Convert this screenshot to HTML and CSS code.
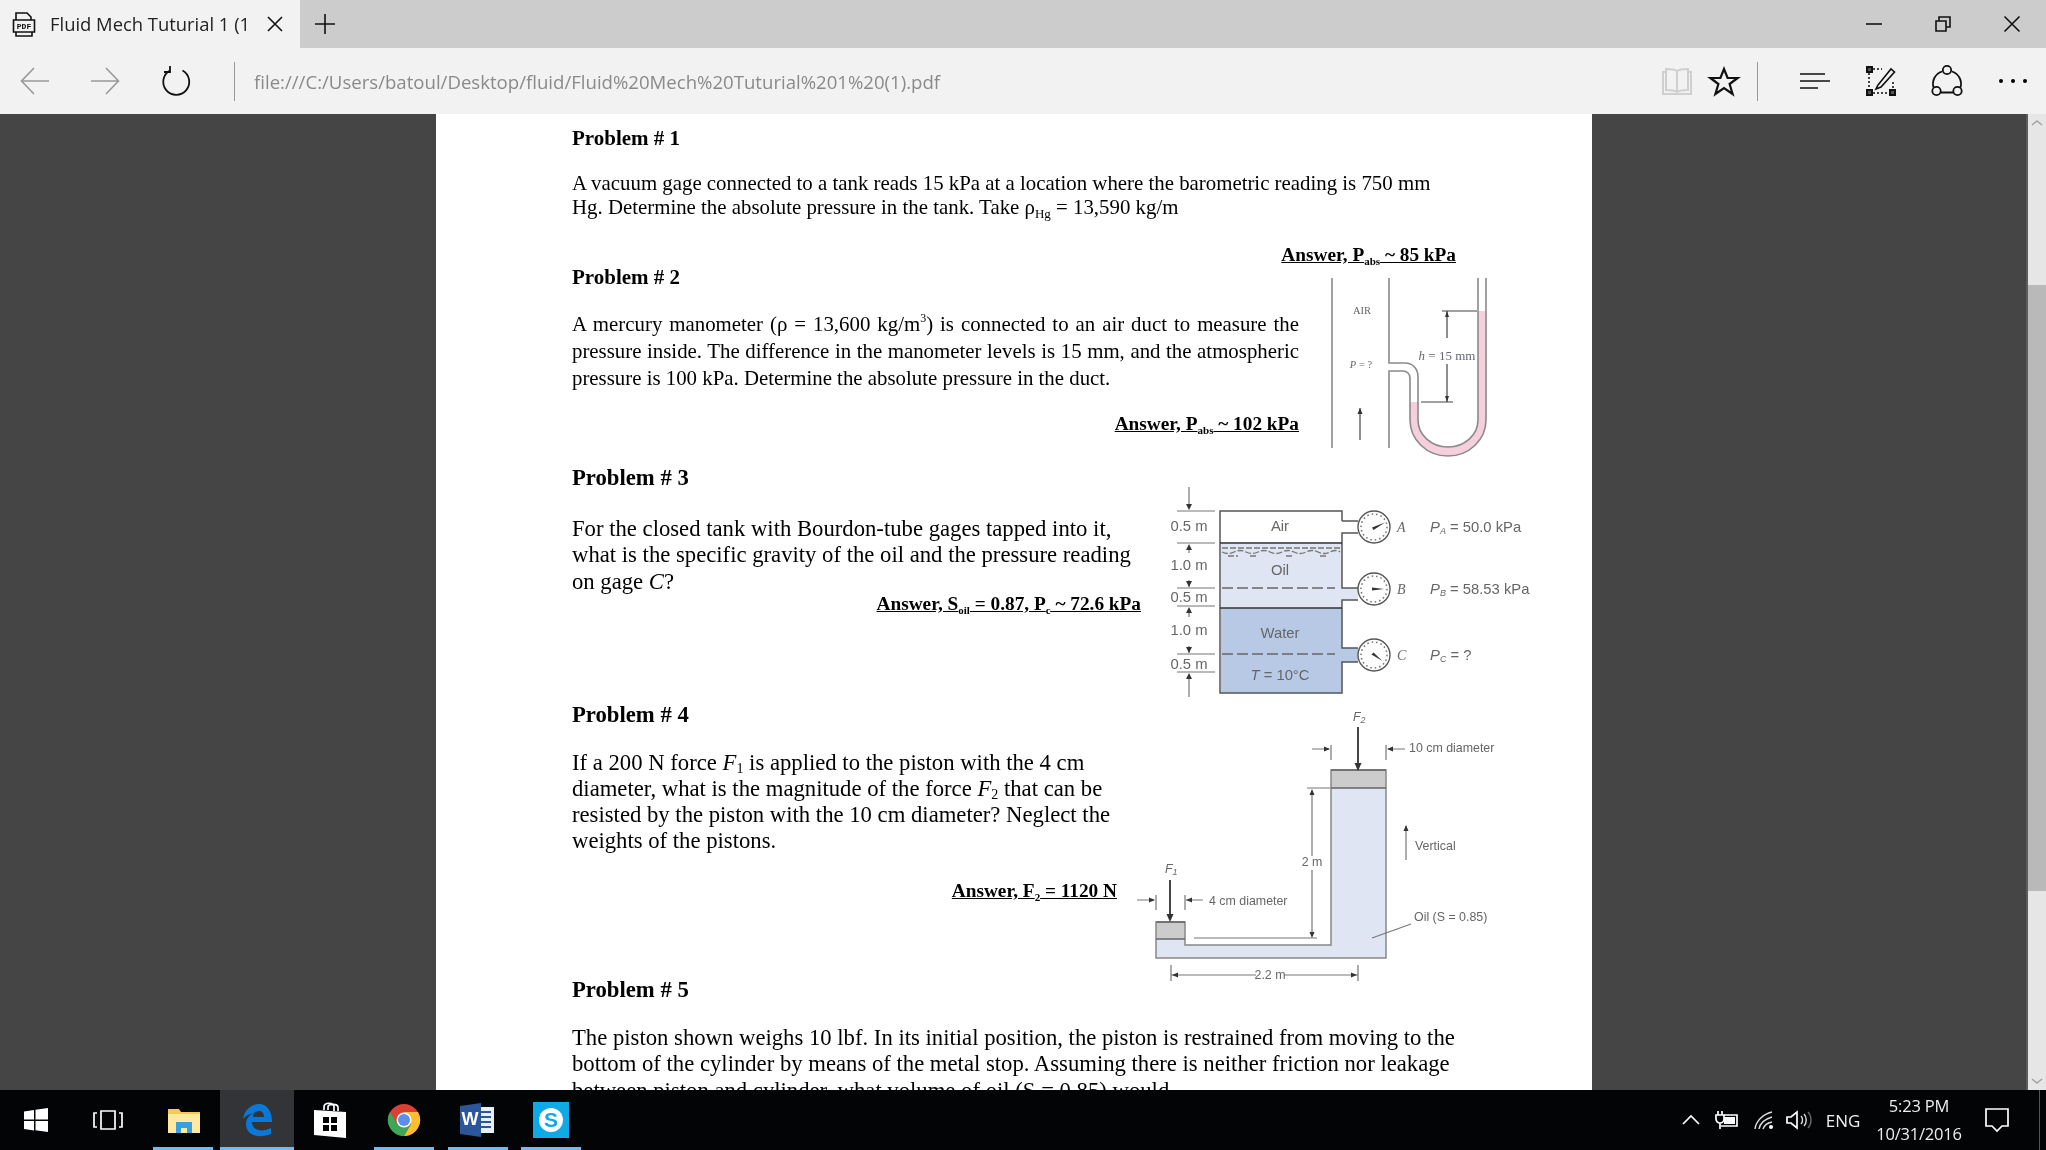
FILE: index.html
```html
<!DOCTYPE html>
<html lang="en">
<head>
<meta charset="utf-8">
<title>Fluid Mech Tuturial 1</title>
<link rel="stylesheet" href="styles.css">
</head>
<body>
<div class="app">
  <header class="tabbar">
    <div class="tab">
      <svg class="tab-icon" viewBox="0 0 24 25" width="24" height="25"><path class="ico-k" d="M4 8V1h11l4 4v3M4 20v4h16v-4"/><path class="ico-k" d="M1.500 8h21v12h-21z"/><text x="12" y="17" class="pdf-label">PDF</text></svg>
      <span class="tab-title">Fluid Mech Tuturial 1 (1</span>
      <svg class="tab-close" viewBox="0 0 16 16" width="16" height="16"><path class="ico-k" d="M1 1l14 14M15 1L1 15"/></svg>
    </div>
    <div class="tab-new"><svg viewBox="0 0 20 20" width="20" height="20"><path class="ico-k" d="M10 0v20M0 10h20"/></svg></div>
    <div class="win-controls">
      <div class="win-btn"><svg viewBox="0 0 16 16" width="16" height="16"><path class="ico-k" d="M0 8h16"/></svg></div>
      <div class="win-btn"><svg viewBox="0 0 16 16" width="16" height="16"><path class="ico-k" d="M1 5h10v10H1zM4 5V1h11v10h-4"/></svg></div>
      <div class="win-btn"><svg viewBox="0 0 16 16" width="16" height="16"><path class="ico-k" d="M0.500 0.500l15 15M15.500 0.500l-15 15"/></svg></div>
    </div>
  </header>

  <nav class="toolbar">
    <div class="tool"><svg viewBox="0 0 30 28" width="30" height="28"><path class="ico-g" d="M29 14H2M14 1L1.500 14 14 27"/></svg></div>
    <div class="tool"><svg viewBox="0 0 30 28" width="30" height="28"><path class="ico-g" d="M1 14h27M16 1l12.500 13L16 27"/></svg></div>
    <div class="tool"><svg viewBox="0 0 30 30" width="30" height="30"><path class="ico-k2" d="M9 4.500a13 13 0 1 0 12.500 0"/><path class="ico-k2" d="M9 0v6H3"/></svg></div>
    <div class="tool-sep left-sep"><i></i></div>
    <div class="url">file:///C:/Users/batoul/Desktop/fluid/Fluid%20Mech%20Tuturial%201%20(1).pdf</div>
    <div class="tool"><svg viewBox="0 0 30 28" width="30" height="28"><path class="ico-l" d="M15 4c-3-2-7-2-11-2v21c4 0 8 0 11 2 3-2 7-2 11-2V2c-4 0-8 0-11 2zM15 4v21M4 5H1v22h28V5h-3"/></svg></div>
    <div class="tool"><svg viewBox="0 0 30 28" width="30" height="28"><path class="ico-star" d="M15 2l3.600 9h10l-8 6 3 10-8.600-6-8.600 6 3-10-8-6h10z"/></svg></div>
    <div class="tool-sep right-sep"><i></i></div>
    <div class="tool"><svg viewBox="0 0 30 18" width="30" height="18"><path class="ico-k" d="M0 2h25M0 9h30M0 16h18"/></svg></div>
    <div class="tool"><svg viewBox="0 0 30 30" width="30" height="30"><path class="ico-dot" d="M3 7v18M7 3h9M7 27h16M27 16v8"/><path class="ico-sq" d="M1 1h5v5H1zM1 24h5v5H1zM24 24h5v5h-5z"/><path class="ico-k" d="M12 19L25 3l3.500 3L15 21l-5 2z"/></svg></div>
    <div class="tool"><svg viewBox="0 0 32 32" width="32" height="32"><path class="ico-k2" d="M11 6.500a13 13 0 0 0-8.500 16M10 27.500h12M21 6.500a13 13 0 0 1 8.500 16"/><circle class="ico-k2" cx="16" cy="5" r="4.200"/><circle class="ico-k2" cx="5.500" cy="26" r="4.200"/><circle class="ico-k2" cx="26.500" cy="26" r="4.200"/></svg></div>
    <div class="tool"><svg viewBox="0 0 28 4" width="28" height="4"><circle cx="2" cy="2" r="2"/><circle cx="14" cy="2" r="2"/><circle cx="26" cy="2" r="2"/></svg></div>
  </nav>

  <main class="viewer">
    <div class="stage">
      <article class="page">
        <section class="sec-1">
          <h2>Problem # 1</h2>
          <p class="body p1-body">A vacuum gage connected to a tank reads 15 kPa at a location where the barometric reading is 750 mm<br>Hg. Determine the absolute pressure in the tank. Take ρ<sub class="sb">Hg</sub> = 13,590 kg/m</p>
          <p class="answer a1"><u>Answer, P<sub class="sa">abs</sub> ~ 85 kPa</u></p>
        </section>

        <section class="prob sec-2">
          <div class="col col-2">
            <h2>Problem # 2</h2>
            <p class="body p2-body">A mercury manometer (ρ = 13,600 kg/m<sup class="sp">3</sup>) is connected to an air duct to measure the pressure inside. The difference in the manometer levels is 15 mm, and the atmospheric pressure is 100 kPa. Determine the absolute pressure in the duct.</p>
            <p class="answer a2"><u>Answer, P<sub class="sa">abs</sub> ~ 102 kPa</u></p>
          </div>
          <svg class="fig fig-2" viewBox="1320 270 180 195" width="180" height="195">
            <path class="pink" d="M1410 402h8v18a30 27 0 0 0 60 0V311h8v109a38 36 0 0 1-76 0z"/>
            <path class="wall" d="M1332 278v170M1389 278v85h16c8 0 13 6 13 14v43a30 27 0 0 0 60 0V278M1389 448v-77h14c4 0 7 3 7 7v42a38 36 0 0 0 76 0V278"/>
            <path class="thin" d="M1442 311h35M1421 402h32M1447 311v27M1447 364v38M1360 408v32"/>
            <path class="tip" d="M1447 311l-2 6h4zM1447 402l-2-6h4zM1360 408l-2.500 6h5z"/>
            <text class="serif8" x="1362" y="314" text-anchor="middle">AIR</text>
            <text class="serif8" x="1361" y="368" text-anchor="middle"><tspan class="it">P</tspan> = ?</text>
            <text class="serif-h" x="1447" y="360" text-anchor="middle"><tspan class="it">h</tspan> = 15 mm</text>
          </svg>
        </section>

        <section class="prob sec-3">
          <div class="col col-3">
            <h2 class="big">Problem # 3</h2>
            <p class="body big p3-body">For the closed tank with Bourdon-tube gages tapped into it,<br>what is the specific gravity of the oil and the pressure reading<br>on gage <i>C</i>?</p>
            <p class="answer a3"><u>Answer, S<sub class="sa">oil</sub> = 0.87, P<sub class="sa">c</sub> ~ 72.6 kPa</u></p>
          </div>
          <svg class="fig fig-3" viewBox="1160 480 375 220" width="375" height="220">
            <path class="oil" d="M1221 542h121v46h16v12h-16v8h-121z"/>
            <path class="water" d="M1221 608h121v40h16v14h-16v31h-121z"/>
            <path class="tank" d="M1342 521V511h-122v182h122v-31h16M1358 521h-16M1358 533h-16v55h16M1358 600h-16v48h16"/>
            <path class="tank2" d="M1220 543h122M1220 608h122"/>
            <path class="wave" d="M1222 548h118M1222 552c4 2 8 2 12 0s8-2 12 0 8 2 12 0 8-2 12 0 8 2 12 0 8-2 12 0 8 2 12 0 8-2 12 0 8 2 12 0 8-2 10 0M1228 556h10M1250 556h8M1286 556h8M1320 556h8"/>
            <path class="dash" d="M1222 588h113M1222 654h113"/>
            <path class="dim" d="M1177 511h38M1177 543h38M1177 588h38M1177 606h38M1177 654h38M1177 672h38M1189 487v20M1189 546v7M1189 580v7M1189 610v7M1189 646v7M1189 676v21"/>
            <path class="tip" d="M1189 510l-3-6h6zM1189 544l-3 6h6zM1189 587l-3-6h6zM1189 607l-3 6h6zM1189 653l-3-6h6zM1189 673l-3 6h6z"/>
            <g class="gauge"><circle cx="1374" cy="527" r="16"/><circle cx="1374" cy="589" r="16"/><circle cx="1374" cy="655" r="16"/></g>
            <g class="tick"><circle cx="1374" cy="527" r="13"/><circle cx="1374" cy="589" r="13"/><circle cx="1374" cy="655" r="13"/></g>
            <path class="needle" d="M1372 527.500l13-5-11.500 7.500zM1372 587.500l12 1.500-12 1.500zM1373.500 652.500l9 8.500-11-6.500z"/>
            <g class="sans-fig3">
              <text x="1189" y="531" text-anchor="middle">0.5 m</text>
              <text x="1189" y="570" text-anchor="middle">1.0 m</text>
              <text x="1189" y="602" text-anchor="middle">0.5 m</text>
              <text x="1189" y="635" text-anchor="middle">1.0 m</text>
              <text x="1189" y="669" text-anchor="middle">0.5 m</text>
              <text x="1280" y="531" text-anchor="middle">Air</text>
              <text x="1280" y="575" text-anchor="middle">Oil</text>
              <text x="1280" y="638" text-anchor="middle">Water</text>
              <text x="1280" y="680" text-anchor="middle"><tspan class="it">T</tspan> = 10°C</text>
              <text x="1430" y="532"><tspan class="it">P<tspan class="tiny" dy="2">A</tspan></tspan><tspan dy="-2"> = 50.0 kPa</tspan></text>
              <text x="1430" y="594"><tspan class="it">P<tspan class="tiny" dy="2">B</tspan></tspan><tspan dy="-2"> = 58.53 kPa</tspan></text>
              <text x="1430" y="660"><tspan class="it">P<tspan class="tiny" dy="2">C</tspan></tspan><tspan dy="-2"> = ?</tspan></text>
            </g>
            <g class="serif11">
              <text x="1397" y="532">A</text>
              <text x="1397" y="594">B</text>
              <text x="1397" y="660">C</text>
            </g>
          </svg>
        </section>

        <section class="prob sec-4">
          <div class="col col-4">
            <h2 class="big">Problem # 4</h2>
            <p class="body big p4-body">If a 200 N force <i>F</i><sub class="sn">1</sub> is applied to the piston with the 4 cm<br>diameter, what is the magnitude of the force <i>F</i><sub class="sn">2</sub> that can be<br>resisted by the piston with the 10 cm diameter? Neglect the<br>weights of the pistons.</p>
            <p class="answer a4"><u>Answer, F<sub class="sa">2</sub> = 1120 N</u></p>
          </div>
          <svg class="fig fig-4" viewBox="1130 705 400 265" width="400" height="265">
            <path class="oil" d="M1156 939h29v6h146V788h55v170h-230z"/>
            <path class="piston" d="M1156 922h29v17h-29zM1331 770h55v18h-55z"/>
            <path class="pipe" d="M1156 922v36h230V770h-55v175h-146v-23z"/>
            <path class="pipe2" d="M1156 922h29M1156 939h29M1331 770h55M1331 788h55"/>
            <path class="heavy" d="M1358 727v38M1170 880v36"/>
            <path class="tip" d="M1358 771l-3.500-8h7zM1170 922l-3.500-8h7z"/>
            <path class="dim" d="M1331 745v15M1386 745v15M1312 749h17M1405 749h-17M1307 788h23M1194 938h123M1312 791v65M1312 870v65M1406 826v34M1156 895v15M1185 895v15M1137 900h17M1203 900h-17M1411 924l-39 14M1171 975h85M1284 975h74M1171 965v16M1358 965v16"/>
            <path class="tip" d="M1312 789l-2.500 6h5zM1312 938l-2.500-6h5zM1406 825l-2.500 6h5zM1330 749l-6-2.500v5zM1387 749l6-2.500v5zM1155 900l-6-2.500v5zM1186 900l6-2.500v5zM1172 975l6-2.500v5zM1357 975l-6-2.500v5z"/>
            <g class="sans-fig4">
              <text x="1409" y="752">10 cm diameter</text>
              <text x="1415" y="850">Vertical</text>
              <text x="1209" y="905">4 cm diameter</text>
              <text x="1414" y="921">Oil (S = 0.85)</text>
              <text x="1312" y="866" text-anchor="middle">2 m</text>
              <text x="1270" y="979" text-anchor="middle">2.2 m</text>
              <text class="it" x="1353" y="721">F<tspan class="tiny" dy="2">2</tspan></text>
              <text class="it" x="1165" y="873">F<tspan class="tiny" dy="2">1</tspan></text>
            </g>
          </svg>
        </section>

        <section class="sec-5">
          <h2 class="big">Problem # 5</h2>
          <p class="body big p5-body">The piston shown weighs 10 lbf. In its initial position, the piston is restrained from moving to the<br>bottom of the cylinder by means of the metal stop. Assuming there is neither friction nor leakage<br>between piston and cylinder, what volume of oil (S = 0.85) would</p>
        </section>
      </article>
    </div>
    <aside class="scrollbar">
      <div class="sb-btn"><svg viewBox="0 0 12 6" width="12" height="6"><path class="ico-sb" d="M1 5l5-4 5 4"/></svg></div>
      <div class="sb-track"><div class="sb-thumb"></div></div>
      <div class="sb-btn"><svg viewBox="0 0 12 6" width="12" height="6"><path class="ico-sb" d="M1 1l5 4 5-4"/></svg></div>
    </aside>
  </main>

  <footer class="taskbar">
    <div class="tb-app tb-start"><svg viewBox="0 0 24 24" width="24" height="24"><path class="white" d="M0 3.500l10-1.500v9.500H0zM11.500 1.800L24 0v11.500H11.500zM0 13h10v9.500l-10-1.500zM11.500 13H24v11l-12.500-1.800z"/></svg></div>
    <div class="tb-app tb-view"><svg viewBox="0 0 30 20" width="30" height="20"><path class="wline" d="M8 1h14v18H8zM4 3H1v14h3M26 3h3v14h-3"/></svg></div>
    <div class="tb-app tb-gap"><svg viewBox="0 0 32 26" width="32" height="26"><path fill="#f3c95a" d="M0 2h11l2 3h19v21H0z"/><path fill="#ffe9a0" d="M0 7h32v19H0z"/><path fill="#3a9fe0" d="M8 15h16v11h-5v-5h-6v5H8z"/></svg><span class="run run-file"></span></div>
    <div class="tb-app tb-active"><svg viewBox="0 0 30 32" width="30" height="32"><path fill="#0a78d7" fill-rule="evenodd" d="M1 15C2 6 10 0 17 0c8 0 13 7 13 18H10c0 8 9 11 19 6v6c-13 5-25 1-25-10 0-5 3-9 8-11-5 1-9 3-11 6zM11 13h11c0-4-2-6-5-6-3 0-6 2-6 6z"/></svg><span class="run run-full"></span></div>
    <div class="tb-app"><svg viewBox="0 0 32 36" width="32" height="36"><path class="wline" d="M10 8V5c0-5 10-5 10 0v4M14 8V5c0-3 9-4 10 0v4"/><path class="white" d="M0 8l32 2v26L0 33z"/><path fill="#000" d="M9 15h6v6H9zM17 15h6v6h-6zM9 23h6v6H9zM17 23h6v6h-6z"/></svg></div>
    <div class="tb-app"><svg viewBox="0 0 32 32" width="32" height="32"><circle cx="16" cy="16" r="16" fill="#d94135"/><path fill="#fbc02d" d="M16 32A16 16 0 0 0 30 8H16l7 12z"/><path fill="#3ca755" d="M2 8a16 16 0 0 0 14 24l7-12H9z"/><circle cx="16" cy="16" r="7.500" fill="#fff"/><circle cx="16" cy="16" r="6" fill="#5a8ff0"/></svg><span class="run"></span></div>
    <div class="tb-app"><svg viewBox="0 0 34 34" width="34" height="34"><path fill="#e6eef8" d="M17 4h17v26H17z"/><path fill="#2b579a" d="M20 8h11v2H20zM20 13h11v2H20zM20 18h11v2H20zM20 23h11v2H20z"/><path fill="#2b579a" d="M0 3l21-3v34L0 31z"/><text x="10" y="22" class="word-w">W</text></svg><span class="run"></span></div>
    <div class="tb-app"><svg viewBox="0 0 36 36" width="36" height="36"><path fill="#0fa9e6" d="M0 0h36v36H0z"/><circle cx="18" cy="18" r="12" fill="#fff"/><text x="18" y="25" class="skype-s">S</text></svg><span class="run"></span></div>
    <div class="tray">
      <div class="tr"><svg viewBox="0 0 18 10" width="18" height="10"><path class="wline" d="M1 9l8-8 8 8"/></svg></div>
      <div class="tr"><svg viewBox="0 0 24 18" width="24" height="18"><path class="wline" d="M3 0v4M7 0v4M1 4h8v4a4 4 0 0 1-8 0zM5 12v6"/><path class="wline" d="M9 4h13v11H6"/><path class="white" d="M9 6h11v7H9z"/></svg></div>
      <div class="tr"><svg viewBox="0 0 20 18" width="20" height="18"><path class="wthin" d="M1 18C2 10 9 3 18 1M5 18c1-6 6-10 13-12M9 18c1-3 4-6 9-7"/><circle class="white" cx="17" cy="16" r="2"/></svg></div>
      <div class="tr"><svg viewBox="0 0 26 18" width="26" height="18"><path class="wline" d="M1 6h4l6-5v16l-6-5H1z"/><path class="wthin" d="M15 5c2 2 2 6 0 8M18 3c3 3 3 9 0 12"/><path class="wfaint" d="M22 1c4 4 4 12 0 16"/></svg></div>
      <div class="tr tr-text">ENG</div>
      <div class="tr clock"><span>5:23 PM</span><span>10/31/2016</span></div>
      <div class="tr"><svg viewBox="0 0 24 25" width="24" height="25"><path class="wline" d="M1 1h22v17h-6l-5 5-5-5H1z"/></svg></div>
      <div class="tr-end"><i></i></div>
    </div>
  </footer>
</div>
</body>
</html>
```
FILE: styles.css
```css
* { box-sizing: border-box; }
html, body { margin: 0; height: 100%; overflow: hidden; }
body { font-family: "Open Sans", "Noto Sans", sans-serif; }
svg { display: block; overflow: visible; }

.app { width: 2046px; height: 1150px; display: flex; flex-direction: column; }

/* icon strokes */
.ico-k, .ico-k2, .ico-g, .ico-l, .ico-star, .ico-sb, .ico-dot, .ico-sq, .wline, .wthin, .wfaint { fill: none; }
.ico-k { stroke: #111; stroke-width: 1.6; }
.ico-k2 { stroke: #111; stroke-width: 1.8; }
.ico-g { stroke: #999; stroke-width: 1.6; }
.ico-l { stroke: #cfcfcf; stroke-width: 2; }
.ico-star { stroke: #111; stroke-width: 2.2; }
.ico-sb { stroke: #a3a3a3; stroke-width: 1.5; }
.ico-dot { stroke: #444; stroke-width: 2; stroke-dasharray: 2 2; }
.ico-sq { stroke: #111; stroke-width: 2; fill: #555; }
.pdf-label { font: bold 8px "Liberation Mono", monospace; text-anchor: middle; fill: #111; }
.white { fill: #fff; }
.wline { stroke: #fff; stroke-width: 1.7; }
.wthin { stroke: #ddd; stroke-width: 1.4; }
.wfaint { stroke: #666; stroke-width: 1.4; }
.word-w { font: bold 18px "Liberation Sans", sans-serif; fill: #fff; text-anchor: middle; }
.skype-s { font: bold 21px "Liberation Sans", sans-serif; fill: #0fa9e6; text-anchor: middle; }

/* title bar */
.tabbar { height: 48px; background: #cccccc; display: flex; align-items: stretch; filter: blur(.4px); }
.tab { width: 300px; background: #f2f2f2; display: flex; align-items: center; padding-left: 12px; }
.tab-title { margin-left: 14px; width: 217px; padding-bottom: 2px; font-size: 18.400px; color: #222; white-space: nowrap; }
.tab-new { width: 35px; display: flex; align-items: center; justify-content: flex-end; }
.win-controls { margin-left: auto; display: flex; }
.win-btn { width: 69px; display: flex; align-items: center; justify-content: center; }

/* toolbar */
.toolbar {
  height: 66px; background: #f2f2f2; display: grid; align-items: stretch; filter: blur(.4px);
  grid-template-columns: 69px 71px 71px 43px 1fr 47px 47px 34.500px 66px 66px 66px 66px;
}
.tool { display: flex; align-items: center; justify-content: center; }
.tool-sep { display: flex; align-items: center; }
.tool-sep i { display: block; width: 1px; height: 39px; background: #999; }
.left-sep { padding-left: 23px; }
.right-sep { padding-left: 9px; }
.url { align-self: center; font-size: 18.600px; color: #8a8a8a; white-space: nowrap; }

/* document area */
.viewer { flex: 1; min-height: 0; display: flex; overflow: hidden; }
.stage { width: 2028px; background: #454545; display: flex; justify-content: center; box-shadow: inset -2px 0 0 #5c5c5c; }
.page {
  width: 1156px; height: 976px; background: #fff; overflow: hidden; padding: 12px 0 0 136px;
  font-family: "Liberation Serif", "Times New Roman", serif; font-size: 20.850px; color: #000; filter: blur(.4px);
}
h2 { margin: 0; font-size: 21px; line-height: 24px; font-weight: bold; }
p { margin: 0; }
.body { line-height: 27px; }
h2.big, .body.big { font-size: 22.700px; }
.answer { font-weight: bold; line-height: 24px; font-size: 19.300px; text-align: right; }
.sa { font-size: 11px; line-height: 0; vertical-align: -4px; }
.sb { font-size: 13px; line-height: 0; vertical-align: -4px; }
.sp { font-size: 12px; line-height: 0; vertical-align: 9px; }
.sn { font-size: 14px; line-height: 0; vertical-align: -3px; }

.sec-1 { width: 884px; height: 139px; }
.p1-body { line-height: 24px; margin-top: 21px; white-space: nowrap; }
.a1 { margin-top: 24px; }

.prob { display: flex; align-items: flex-start; }
.sec-2 { height: 201px; }
.col-2 { width: 727px; }
.p2-body { margin-top: 22px; text-align: justify; }
.a2 { margin-top: 20px; }
.fig-2 { margin: 5px 0 0 21px; }

.sec-3 { height: 237px; }
.col-3 { width: 569px; }
.p3-body { margin-top: 26px; line-height: 26.400px; white-space: nowrap; }
.a3 { margin-top: -3px; }
.fig-3 { margin: 14px 0 0 19px; }

.sec-4 { height: 275px; }
.col-4 { width: 545px; }
.p4-body { margin-top: 23px; line-height: 26px; white-space: nowrap; }
.a4 { margin-top: 25px; }
.fig-4 { margin: 2px 0 0 13px; }

.p5-body { margin-top: 22.500px; line-height: 26.500px; white-space: nowrap; }

/* figures */
.fig { filter: blur(.7px); flex: none; }
.pink { fill: #f6cfdc; }
.wall { fill: none; stroke: #8a8a8a; stroke-width: 1.6; }
.thin { fill: none; stroke: #444; stroke-width: 1.2; }
.tip { fill: #333; }
.serif8 { font: 10.500px "Liberation Serif", serif; fill: #666; }
.serif-h { font: 13px "Liberation Serif", serif; fill: #667; }
.it { font-style: italic; }
.oil { fill: #dfe5f3; }
.water { fill: #b8c9e6; }
.piston { fill: #cccccc; }
.tank { fill: none; stroke: #555; stroke-width: 1.5; }
.tank2 { fill: none; stroke: #333; stroke-width: 1.6; }
.wave { fill: none; stroke: #777; stroke-width: 1.3; stroke-dasharray: 6 2; }
.dash { fill: none; stroke: #666; stroke-width: 1.3; stroke-dasharray: 11 4; }
.dim { fill: none; stroke: #777; stroke-width: 1.2; }
.gauge circle { fill: #fff; stroke: #555; stroke-width: 1.4; }
.tick circle { fill: none; stroke: #777; stroke-width: 1.6; stroke-dasharray: 1.500 3; }
.needle { fill: #333; }
.sans-fig3 { font: 14.800px "Liberation Sans", sans-serif; fill: #666; }
.sans-fig4 { font: 12.400px "Liberation Sans", sans-serif; fill: #666; }
.tiny { font-size: 9px; }
.serif11 { font: italic 14px "Liberation Serif", serif; fill: #666; }
.pipe { fill: none; stroke: #888; stroke-width: 1.5; }
.pipe2 { fill: none; stroke: #666; stroke-width: 1.3; }
.heavy { fill: none; stroke: #333; stroke-width: 1.8; }

/* scrollbar */
.scrollbar { width: 18px; background: #e6e6e6; display: flex; flex-direction: column; }
.sb-btn { height: 18px; display: flex; align-items: center; justify-content: center; }
.sb-track { flex: 1; padding-top: 153px; }
.sb-thumb { height: 606px; background: #b9b9b9; }

/* taskbar */
.taskbar { height: 60px; background: #030406; display: flex; align-items: stretch; filter: blur(.4px); }
.tb-app { width: 73.400px; display: flex; flex-direction: column; align-items: center; justify-content: center; position: relative; }
.tb-start, .tb-view { width: 72px; }
.tb-gap { margin-left: 3px; }
.tb-active { background: #333438; }
.run { position: absolute; bottom: 0; left: 7px; width: 60px; height: 3px; background: #76b9ed; }
.run-file { left: 6px; }
.run-full { left: 0; width: 100%; }
.tray {
  margin-left: auto; width: 373px; display: grid; color: #eee; font-size: 17px; align-items: center;
  grid-template-columns: 36px 36px 38px 32px 56px 96px 60px 19px; height: 100%;
}
.tr { display: flex; align-items: center; justify-content: center; }
.clock { flex-direction: column; font-size: 16.500px; line-height: 28px; white-space: nowrap; letter-spacing: -.2px; }
.tr-end { height: 100%; padding-left: 12px; }
.tr-end i { display: block; width: 1px; height: 100%; background: #555; }
```
